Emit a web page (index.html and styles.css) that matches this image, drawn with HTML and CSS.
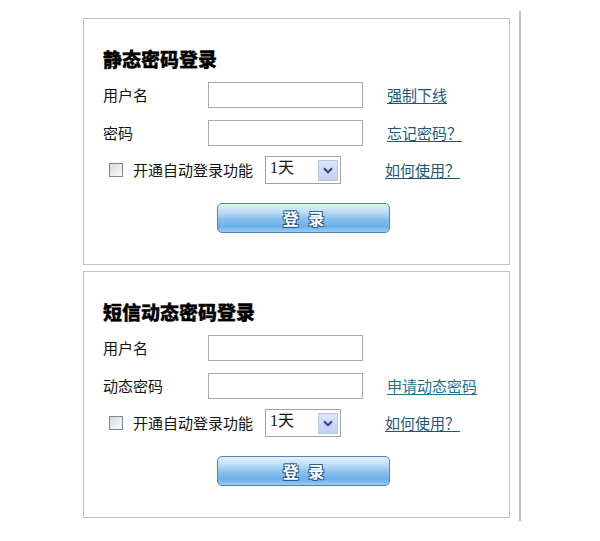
FILE: index.html
```html
<!DOCTYPE html>
<html lang="zh-CN">
<head>
<meta charset="utf-8">
<title>登录</title>
<link rel="stylesheet" href="styles.css">
</head>
<body>
<div class="page">
  <div class="panels">
    <div class="panel">
      <div class="title">静态密码登录</div>
      <div class="row first">
        <span class="label">用户名</span>
        <input class="field" type="text">
        <a class="link" href="#">强制下线</a>
      </div>
      <div class="row second">
        <span class="label">密码</span>
        <input class="field" type="password">
        <a class="link" href="#">忘记密码？</a>
      </div>
      <div class="auto">
        <input class="cb" type="checkbox">
        <span class="auto-text">开通自动登录功能</span>
        <div class="select">
          <span class="sel-val">1天</span>
          <span class="sel-btn"><svg width="10" height="7" viewBox="0 0 10 7"><path d="M1 1.2 L5 5.2 L9 1.2" fill="none" stroke="#2a4a9a" stroke-width="2.2"/></svg></span>
        </div>
        <a class="link how" href="#">如何使用？</a>
      </div>
      <button class="btn" type="button">登 录</button>
    </div>
    <div class="panel">
      <div class="title">短信动态密码登录</div>
      <div class="row first">
        <span class="label">用户名</span>
        <input class="field" type="text">
        <span></span>
      </div>
      <div class="row second">
        <span class="label">动态密码</span>
        <input class="field" type="password">
        <a class="link teal" href="#">申请动态密码</a>
      </div>
      <div class="auto">
        <input class="cb" type="checkbox">
        <span class="auto-text">开通自动登录功能</span>
        <div class="select">
          <span class="sel-val">1天</span>
          <span class="sel-btn"><svg width="10" height="7" viewBox="0 0 10 7"><path d="M1 1.2 L5 5.2 L9 1.2" fill="none" stroke="#2a4a9a" stroke-width="2.2"/></svg></span>
        </div>
        <a class="link how" href="#">如何使用？</a>
      </div>
      <button class="btn" type="button">登 录</button>
    </div>
  </div>
  <div class="vline"></div>
</div>
</body>
</html>
```
FILE: styles.css
```css
html, body {
  margin: 0;
  padding: 0;
  background: #ffffff;
}
body {
  font-family: "Noto Sans CJK SC", "Noto Sans", sans-serif;
  font-size: 15px;
  color: #111111;
}
.page {
  display: flex;
  align-items: flex-start;
  padding: 11px 0 0 83px;
}
.panels {
  display: flex;
  flex-direction: column;
  gap: 6px;
  margin-top: 7px;
  width: 427px;
}
.panel {
  box-sizing: border-box;
  height: 247px;
  border: 1px solid #c2c2c2;
  padding: 0 0 0 19px;
  display: flex;
  flex-direction: column;
  align-items: flex-start;
}
.vline {
  margin-left: 9px;
  width: 2px;
  height: 510px;
  background: #bdbdbd;
}
.title {
  margin-top: 30px;
  height: 20px;
  line-height: 20px;
  font-size: 19px;
  font-weight: 900;
  color: #000000;
  -webkit-text-stroke: 0.3px #000;
}
.row {
  display: grid;
  grid-template-columns: 105px 155px auto;
  align-items: center;
  height: 26px;
}
.row.first { margin-top: 13px; }
.row.second { margin-top: 12px; }
.row .link { margin-left: 24px; }
.label {
  line-height: 20px;
}
.field {
  box-sizing: border-box;
  width: 155px;
  height: 26px;
  margin: 0;
  border: 1px solid #a9a9a9;
  background: #fff;
  padding: 0 4px;
  font: inherit;
}
.link {
  color: #1d5876;
  text-decoration: underline;
  text-underline-offset: 2px;
  line-height: 20px;
}
.link.teal { color: #22708f; }
.auto {
  margin-top: 10px;
  height: 28px;
  display: flex;
  align-items: center;
  padding-left: 6px;
}
.cb {
  appearance: none;
  -webkit-appearance: none;
  box-sizing: border-box;
  width: 14px;
  height: 14px;
  margin: 0 10px 0 0;
  border: 1px solid #7d8791;
  background: linear-gradient(135deg, #d6d8da 0%, #eeeeee 60%, #fafafa 100%);
}
.auto-text {
  width: 120px;
  margin-right: 12px;
  white-space: nowrap;
  line-height: 20px;
}
.select {
  box-sizing: border-box;
  width: 76px;
  height: 28px;
  border: 1px solid #a3a3a3;
  background: #fff;
  display: flex;
  align-items: center;
  justify-content: space-between;
  padding: 0 2px 0 4px;
}
.sel-val {
  font-family: "Liberation Serif", "Noto Sans CJK SC", serif;
  font-size: 16px;
  line-height: 18px;
  margin-bottom: 5px;
}
.sel-btn {
  box-sizing: border-box;
  width: 20px;
  height: 21px;
  border: 1px solid #b7c4e6;
  background: linear-gradient(180deg, #dde6f9 0%, #c3d1f1 100%);
  display: flex;
  align-items: center;
  justify-content: center;
}
.how {
  margin-left: 44px;
}
.btn {
  margin: 19px 0 0 114px;
  box-sizing: border-box;
  width: 173px;
  height: 30px;
  border: 1px solid #4f84b8;
  border-radius: 5px;
  background: linear-gradient(180deg, #e4f2fd 0%, #b9dcf7 30%, #86bfee 55%, #6cafe6 80%, #9ccbf1 100%);
  color: #ffffff;
  font-family: "Noto Sans CJK SC", sans-serif;
  font-size: 16px;
  font-weight: bold;
  letter-spacing: 3px;
  padding: 0 0 0 3px;
  text-shadow: 0 0 1px #1e4f80, 1px 1px 0 #2c5f92, -1px -1px 0 #2c5f92, 1px -1px 0 #2c5f92, -1px 1px 0 #2c5f92;
  cursor: pointer;
}
```
